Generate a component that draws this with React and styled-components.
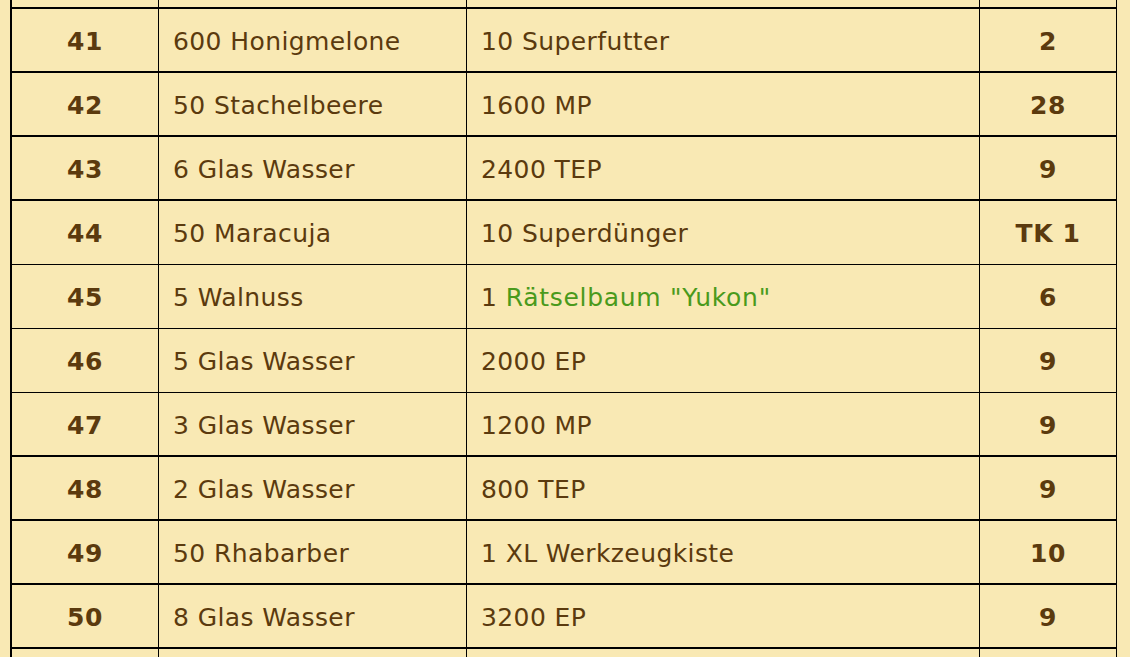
import React from 'react';
import styled, { createGlobalStyle } from 'styled-components';

const GlobalStyle = createGlobalStyle`
  html, body {
    margin: 0;
    padding: 0;
    background: #f9e9b4;
    overflow: hidden;
  }
`;

const Page = styled.div`
  height: 657px;
  overflow: hidden;
  font-family: 'DejaVu Sans', Verdana, sans-serif;
  color: #5b3a0e;
`;

const Table = styled.div`
  display: grid;
  grid-template-columns: 147px 308px 513px 137px;
  grid-auto-rows: 64px;
  margin: -55px 0 0 10px;
  width: 1107px;
  border-left: 2px solid #000;
  box-sizing: border-box;
`;

const Cell = styled.div`
  box-sizing: border-box;
  display: flex;
  align-items: center;
  justify-content: ${(props) => (props.center ? 'center' : 'flex-start')};
  padding: ${(props) => (props.center ? '2px 0 0 0' : '2px 0 0 14px')};
  border-right: 1px solid #000;
  border-bottom: ${(props) => props.line}px solid #000;
  font-size: 25px;
  letter-spacing: ${(props) => (props.bold ? '0.6px' : '0.4px')};
  font-weight: ${(props) => (props.bold ? 700 : 400)};
  white-space: nowrap;
`;

const Link = styled.span`
  color: #4a9a1c;
  letter-spacing: 0.7px;
`;

const rows = [
  { nr: '', need: '', reward: '', pts: '', line: 2 },
  { nr: '41', need: '600 Honigmelone', reward: '10 Superfutter', pts: '2', line: 2 },
  { nr: '42', need: '50 Stachelbeere', reward: '1600 MP', pts: '28', line: 2 },
  { nr: '43', need: '6 Glas Wasser', reward: '2400 TEP', pts: '9', line: 2 },
  { nr: '44', need: '50 Maracuja', reward: '10 Superdünger', pts: 'TK 1', line: 1 },
  {
    nr: '45',
    need: '5 Walnuss',
    reward: (
      <>
        1&nbsp;<Link>Rätselbaum "Yukon"</Link>
      </>
    ),
    pts: '6',
    line: 1,
  },
  { nr: '46', need: '5 Glas Wasser', reward: '2000 EP', pts: '9', line: 1 },
  { nr: '47', need: '3 Glas Wasser', reward: '1200 MP', pts: '9', line: 2 },
  { nr: '48', need: '2 Glas Wasser', reward: '800 TEP', pts: '9', line: 2 },
  { nr: '49', need: '50 Rhabarber', reward: '1 XL Werkzeugkiste', pts: '10', line: 2 },
  { nr: '50', need: '8 Glas Wasser', reward: '3200 EP', pts: '9', line: 2 },
  { nr: '', need: '', reward: '', pts: '', line: 2 },
];

export default function App() {
  return (
    <Page>
      <GlobalStyle />
      <Table>
        {rows.map((row, index) => (
          <React.Fragment key={index}>
            <Cell center bold line={row.line}>{row.nr}</Cell>
            <Cell line={row.line}>{row.need}</Cell>
            <Cell line={row.line}>{row.reward}</Cell>
            <Cell center bold line={row.line}>{row.pts}</Cell>
          </React.Fragment>
        ))}
      </Table>
    </Page>
  );
}
